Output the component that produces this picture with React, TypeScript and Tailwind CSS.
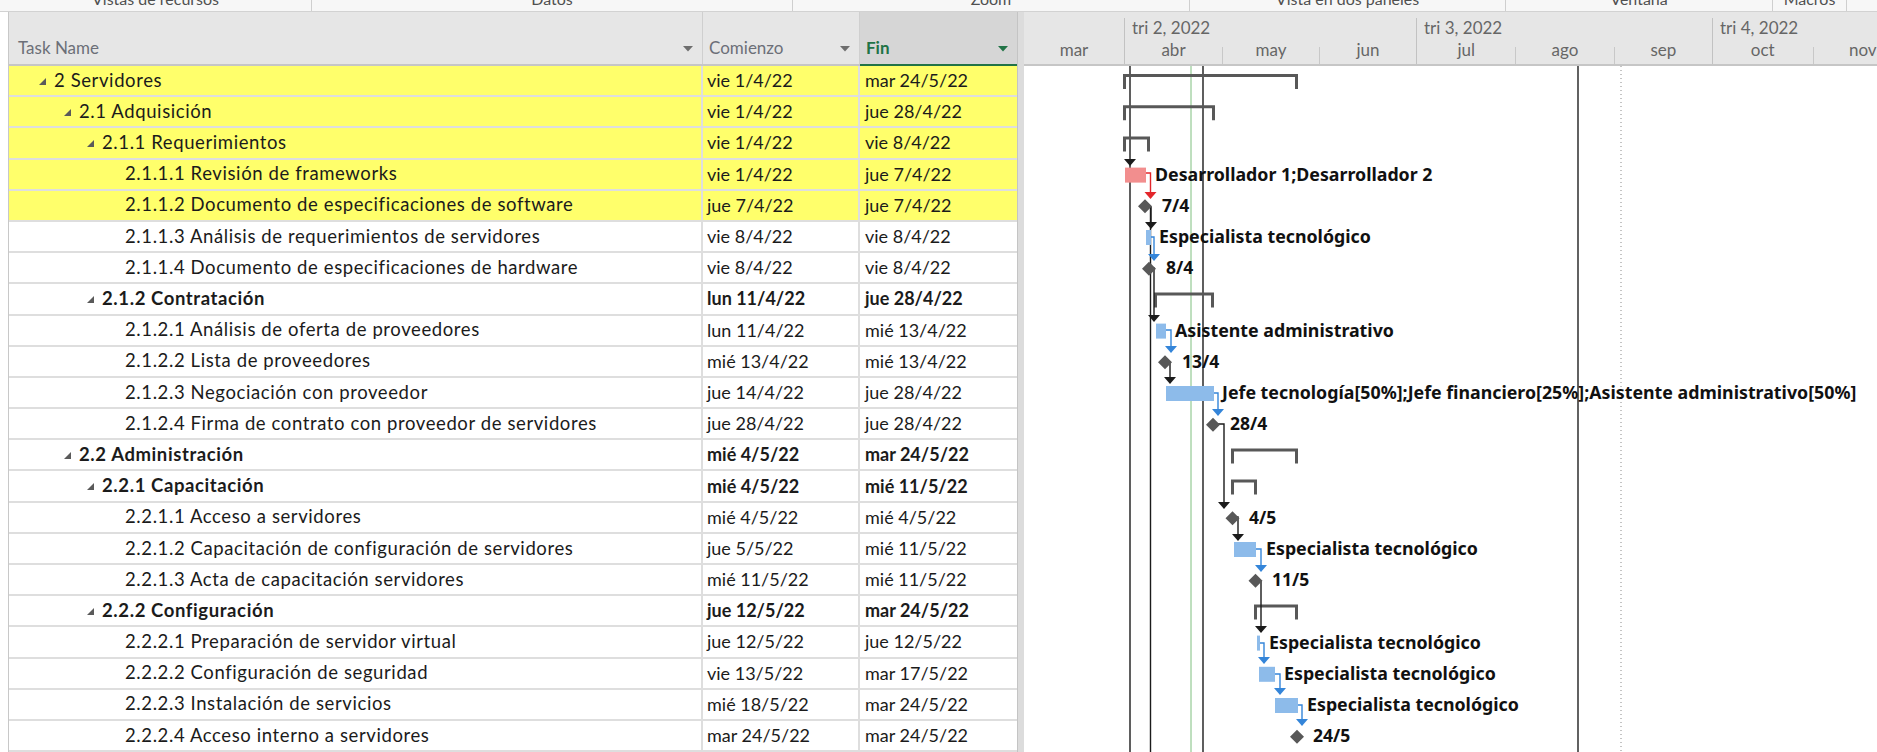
import React from 'react';

type Task = {
  name: string;
  level: 1 | 2 | 3 | 4;
  start: string;
  end: string;
  bold?: boolean;
  hl?: boolean;
};

const tasks: Task[] = [
  { name: '2 Servidores', level: 1, start: 'vie 1/4/22', end: 'mar 24/5/22', hl: true },
  { name: '2.1 Adquisición', level: 2, start: 'vie 1/4/22', end: 'jue 28/4/22', hl: true },
  { name: '2.1.1 Requerimientos', level: 3, start: 'vie 1/4/22', end: 'vie 8/4/22', hl: true },
  { name: '2.1.1.1 Revisión de frameworks', level: 4, start: 'vie 1/4/22', end: 'jue 7/4/22', hl: true },
  { name: '2.1.1.2 Documento de especificaciones de software', level: 4, start: 'jue 7/4/22', end: 'jue 7/4/22', hl: true },
  { name: '2.1.1.3 Análisis de requerimientos de servidores', level: 4, start: 'vie 8/4/22', end: 'vie 8/4/22' },
  { name: '2.1.1.4 Documento de especificaciones de hardware', level: 4, start: 'vie 8/4/22', end: 'vie 8/4/22' },
  { name: '2.1.2 Contratación', level: 3, start: 'lun 11/4/22', end: 'jue 28/4/22', bold: true },
  { name: '2.1.2.1 Análisis de oferta de proveedores', level: 4, start: 'lun 11/4/22', end: 'mié 13/4/22' },
  { name: '2.1.2.2 Lista de proveedores', level: 4, start: 'mié 13/4/22', end: 'mié 13/4/22' },
  { name: '2.1.2.3 Negociación con proveedor', level: 4, start: 'jue 14/4/22', end: 'jue 28/4/22' },
  { name: '2.1.2.4 Firma de contrato con proveedor de servidores', level: 4, start: 'jue 28/4/22', end: 'jue 28/4/22' },
  { name: '2.2 Administración', level: 2, start: 'mié 4/5/22', end: 'mar 24/5/22', bold: true },
  { name: '2.2.1 Capacitación', level: 3, start: 'mié 4/5/22', end: 'mié 11/5/22', bold: true },
  { name: '2.2.1.1 Acceso a servidores', level: 4, start: 'mié 4/5/22', end: 'mié 4/5/22' },
  { name: '2.2.1.2 Capacitación de configuración de servidores', level: 4, start: 'jue 5/5/22', end: 'mié 11/5/22' },
  { name: '2.2.1.3 Acta de capacitación servidores', level: 4, start: 'mié 11/5/22', end: 'mié 11/5/22' },
  { name: '2.2.2 Configuración', level: 3, start: 'jue 12/5/22', end: 'mar 24/5/22', bold: true },
  { name: '2.2.2.1 Preparación de servidor virtual', level: 4, start: 'jue 12/5/22', end: 'jue 12/5/22' },
  { name: '2.2.2.2 Configuración de seguridad', level: 4, start: 'vie 13/5/22', end: 'mar 17/5/22' },
  { name: '2.2.2.3 Instalación de servicios', level: 4, start: 'mié 18/5/22', end: 'mar 24/5/22' },
  { name: '2.2.2.4 Acceso interno a servidores', level: 4, start: 'mar 24/5/22', end: 'mar 24/5/22' },
];

const indent: Record<number, string> = {
  1: 'pl-[30px]',
  2: 'pl-[55px]',
  3: 'pl-[78px]',
  4: 'pl-[116px]',
};

const ribbon = [
  { label: 'Vistas de recursos', w: 'w-[312px]' },
  { label: 'Datos', w: 'w-[481px]' },
  { label: 'Zoom', w: 'w-[397px]' },
  { label: 'Vista en dos paneles', w: 'w-[316px]' },
  { label: 'Ventana', w: 'w-[267px]' },
  { label: 'Macros', w: 'w-[74px]' },
];

const quarters = [
  { label: '', w: 'w-[100px]', months: ['mar'], first: true },
  { label: 'tri 2, 2022', w: 'w-[292px]', months: ['abr', 'may', 'jun'] },
  { label: 'tri 3, 2022', w: 'w-[296px]', months: ['jul', 'ago', 'sep'] },
  { label: 'tri 4, 2022', w: 'w-[200px]', months: ['oct', 'nov'] },
];

// chart geometry, page coordinates; the chart pane starts at x=1025, y=66
const OX = 1025;
const OY = 66;
const RH = 31.2;
const top = (r: number) => r * RH;

const BLUE = '#8dbbea';
const RED = '#f28e8e';
const DARK = '#585858';
const LINK = '#1b1b1b';
const LINK_BLUE = '#3485d9';
const LINK_RED = '#e3262b';

const summaries: [number, number, number][] = [
  [0, 1124, 1299],
  [1, 1124, 1216],
  [2, 1124, 1151],
  [7, 1155, 1215],
  [12, 1232, 1299],
  [13, 1232, 1258],
  [17, 1255, 1299],
];

const bars: [number, number, number, string][] = [
  [3, 1126, 1147, RED],
  [5, 1147, 1152, BLUE],
  [8, 1157, 1167, BLUE],
  [10, 1167, 1215, BLUE],
  [15, 1235, 1257, BLUE],
  [18, 1258, 1261, BLUE],
  [19, 1260, 1276, BLUE],
  [20, 1276, 1299, BLUE],
];

const milestones: [number, number, string, number][] = [
  [4, 1146, '7/4', 1163],
  [6, 1150, '8/4', 1167],
  [9, 1166, '13/4', 1183],
  [11, 1214, '28/4', 1231],
  [14, 1233.5, '4/5', 1250],
  [16, 1256.5, '11/5', 1273],
  [21, 1298, '24/5', 1314],
];

const labels: [number, number, string][] = [
  [3, 1156, 'Desarrollador 1;Desarrollador 2'],
  [5, 1160, 'Especialista tecnológico'],
  [8, 1176, 'Asistente administrativo'],
  [10, 1223, 'Jefe tecnología[50%];Jefe financiero[25%];Asistente administrativo[50%]'],
  [15, 1267, 'Especialista tecnológico'],
  [18, 1270, 'Especialista tecnológico'],
  [19, 1285, 'Especialista tecnológico'],
  [20, 1308, 'Especialista tecnológico'],
];

// [color, startX, startY, bendX, tipY]
const links: [string, number, number, number, number][] = [
  [LINK_RED, 1147, 173, 1151.5, 199],
  [LINK, 1150, 207, 1152, 229],
  [LINK_BLUE, 1152, 237, 1155, 261],
  [LINK, 1150, 268, 1155, 322],
  [LINK_BLUE, 1167, 330, 1172, 353],
  [LINK, 1166, 362, 1171, 384],
  [LINK_BLUE, 1215, 393, 1219, 416],
  [LINK, 1214, 424, 1225, 509],
  [LINK, 1233, 517, 1239, 541],
  [LINK_BLUE, 1257, 549, 1262, 572],
  [LINK, 1256, 581, 1262, 633],
  [LINK_BLUE, 1261, 643, 1265, 664],
  [LINK_BLUE, 1276, 674, 1281, 695],
  [LINK_BLUE, 1299, 705, 1303, 726],
];

function Collapse() {
  return (
    <svg width="8" height="8" viewBox="0 0 8 8" className="mr-[7px] shrink-0 translate-y-[1px]">
      <polygon points="7,0 7,7 0,7" fill="#5a5a5a" />
    </svg>
  );
}

function Caret({ color = '#6e6e6e' }: { color?: string }) {
  return (
    <svg width="10" height="6" viewBox="0 0 10 6" className="shrink-0">
      <polygon points="0,0 10,0 5,5.5" fill={color} />
    </svg>
  );
}

function Arrow({ x, y, color }: { x: number; y: number; color: string }) {
  return <polygon points={`${x - 6},${y - 7} ${x + 6},${y - 7} ${x},${y}`} fill={color} />;
}

function Chart() {
  const lx = (x: number) => x - OX;
  const ly = (y: number) => y - OY;
  return (
    <svg width="852" height="686" className="block" fontFamily="'Noto Sans', 'Open Sans', sans-serif">
      {/* guide lines */}
      <line x1={lx(1131)} y1={0} x2={lx(1131)} y2={686} stroke={LINK} strokeWidth="1.4" />
      <line x1={lx(1151.5)} y1={ly(207)} x2={lx(1151.5)} y2={686} stroke={LINK} strokeWidth="1.4" />
      <line x1={lx(1192)} y1={0} x2={lx(1192)} y2={686} stroke="#7fbf7f" strokeWidth="1" />
      <line x1={lx(1204)} y1={0} x2={lx(1204)} y2={686} stroke={LINK} strokeWidth="1.4" />
      <line x1={lx(1579)} y1={0} x2={lx(1579)} y2={686} stroke="#3a3a3a" strokeWidth="1.6" />
      <line x1={lx(1622)} y1={0} x2={lx(1622)} y2={686} stroke="#8a8a8a" strokeWidth="1" strokeDasharray="1 3" />
      <Arrow x={lx(1131)} y={ly(166)} color={LINK} />

      {summaries.map(([r, a, b]) => (
        <path
          key={`s${r}`}
          d={`M${lx(a) + 1.5} ${top(r) + 23} V${top(r) + 9.5} H${lx(b) - 1.5} V${top(r) + 23}`}
          stroke={DARK}
          strokeWidth="3"
          fill="none"
        />
      ))}

      {bars.map(([r, a, b, c]) => (
        <rect key={`b${r}`} x={lx(a)} y={top(r) + 8} width={b - a} height={15} fill={c} />
      ))}

      {links.map(([c, sx, sy, bx, ty], i) => (
        <g key={`l${i}`}>
          <path d={`M${lx(sx)} ${ly(sy)} H${lx(bx)} V${ly(ty) - 6}`} stroke={c} strokeWidth="1.4" fill="none" />
          <Arrow x={lx(bx)} y={ly(ty)} color={c} />
        </g>
      ))}

      {milestones.map(([r, cx, text, tx]) => (
        <g key={`m${r}`}>
          <polygon
            points={`${lx(cx)},${top(r) + 8.5} ${lx(cx) + 7},${top(r) + 15.5} ${lx(cx)},${top(r) + 22.5} ${lx(cx) - 7},${top(r) + 15.5}`}
            fill={DARK}
          />
          <text x={lx(tx)} y={top(r) + 21} fontSize="17.5" fontWeight="700" fill="#111">
            {text}
          </text>
        </g>
      ))}

      {labels.map(([r, x, text]) => (
        <text key={`t${r}`} x={lx(x)} y={top(r) + 21} fontSize="17.8" fontWeight="700" fill="#111">
          {text}
        </text>
      ))}
    </svg>
  );
}

export default function App() {
  return (
    <div className="flex h-[752px] w-[1877px] flex-col overflow-hidden bg-white font-['Lato','Liberation_Sans',sans-serif] text-[#1b1b1b]">
      {/* ribbon group captions, cut off at the top */}
      <div className="flex h-[12px] shrink-0 overflow-hidden border-b border-[#d2d2d2] bg-[#f7f7f7]">
        {ribbon.map((g) => (
          <div key={g.label} className={`${g.w} flex shrink-0 justify-center border-r border-[#cfcfcf]`}>
            <span className="-mt-[9px] text-[16px] leading-[16px] text-[#505050]">{g.label}</span>
          </div>
        ))}
      </div>

      <div className="flex min-h-0 flex-1">
        {/* task sheet */}
        <div className="w-[9px] shrink-0 border-r border-[#c8c8c8] bg-white" />
        <div className="flex w-[1008px] shrink-0 flex-col">
          <div className="flex h-[54px] shrink-0 border-b-2 border-[#c6c6c6] bg-[#e6e6e6] text-[17px] text-[#6c6f78]">
            <div className="flex w-[694px] items-end justify-between border-r border-[#cfcfcf] pb-[4px] pl-[9px] pr-[9px]">
              <span>Task Name</span>
              <span className="mb-[8px]"><Caret /></span>
            </div>
            <div className="flex w-[157px] items-end justify-between border-r border-[#cfcfcf] pb-[4px] pl-[6px] pr-[9px]">
              <span>Comienzo</span>
              <span className="mb-[8px]"><Caret /></span>
            </div>
            <div className="-mb-[2px] flex w-[157px] items-end justify-between border-b-2 border-[#217346] bg-[#d6d6d6] pb-[4px] pl-[6px] pr-[9px]">
              <span className="font-bold text-[#217346]">Fin</span>
              <span className="mb-[8px]"><Caret color="#217346" /></span>
            </div>
          </div>
          {tasks.map((t) => (
            <div
              key={t.name}
              className={`flex h-[31.2px] shrink-0 border-b-2 border-[#dedede] text-[18px] ${t.hl ? 'bg-[#ffff6b]' : 'bg-white'} ${t.bold ? 'font-bold' : ''}`}
            >
              <div className={`flex w-[694px] items-center border-r-2 border-[#dedede] ${indent[t.level]}`}>
                {t.level < 4 && <Collapse />}
                <span className="whitespace-nowrap text-[18.5px] tracking-[0.6px]">{t.name}</span>
              </div>
              <div className="flex w-[157px] items-center border-r-2 border-[#dedede] pl-[4px]">{t.start}</div>
              <div className="flex w-[157px] items-center pl-[5px]">{t.end}</div>
            </div>
          ))}
        </div>

        {/* splitter */}
        <div className="w-[7px] shrink-0 border-l border-[#c4c4c4] bg-[#dcdcdc]" />

        {/* chart */}
        <div className="flex min-w-0 flex-1 flex-col">
          <div className="flex h-[54px] shrink-0 overflow-hidden border-b-2 border-[#c6c6c6] bg-[#e6e6e6] pt-[6px] text-[17px] text-[#666]">
            {quarters.map((q) => (
              <div key={q.w + q.label} className={`${q.w} flex shrink-0 flex-col ${q.first ? '' : 'border-l border-[#c2c2c2]'}`}>
                <div className="h-[22px] pl-[7px] leading-[20px]">{q.label}</div>
                <div className="flex flex-1">
                  {q.months.map((m, i) => (
                    <div key={m} className="flex flex-1">
                      {i > 0 && <div className="h-[17px] w-px self-end bg-[#c8c8c8]" />}
                      <div className="flex-1 text-center leading-[20px]">{m}</div>
                    </div>
                  ))}
                </div>
              </div>
            ))}
          </div>
          <Chart />
        </div>
      </div>
    </div>
  );
}
